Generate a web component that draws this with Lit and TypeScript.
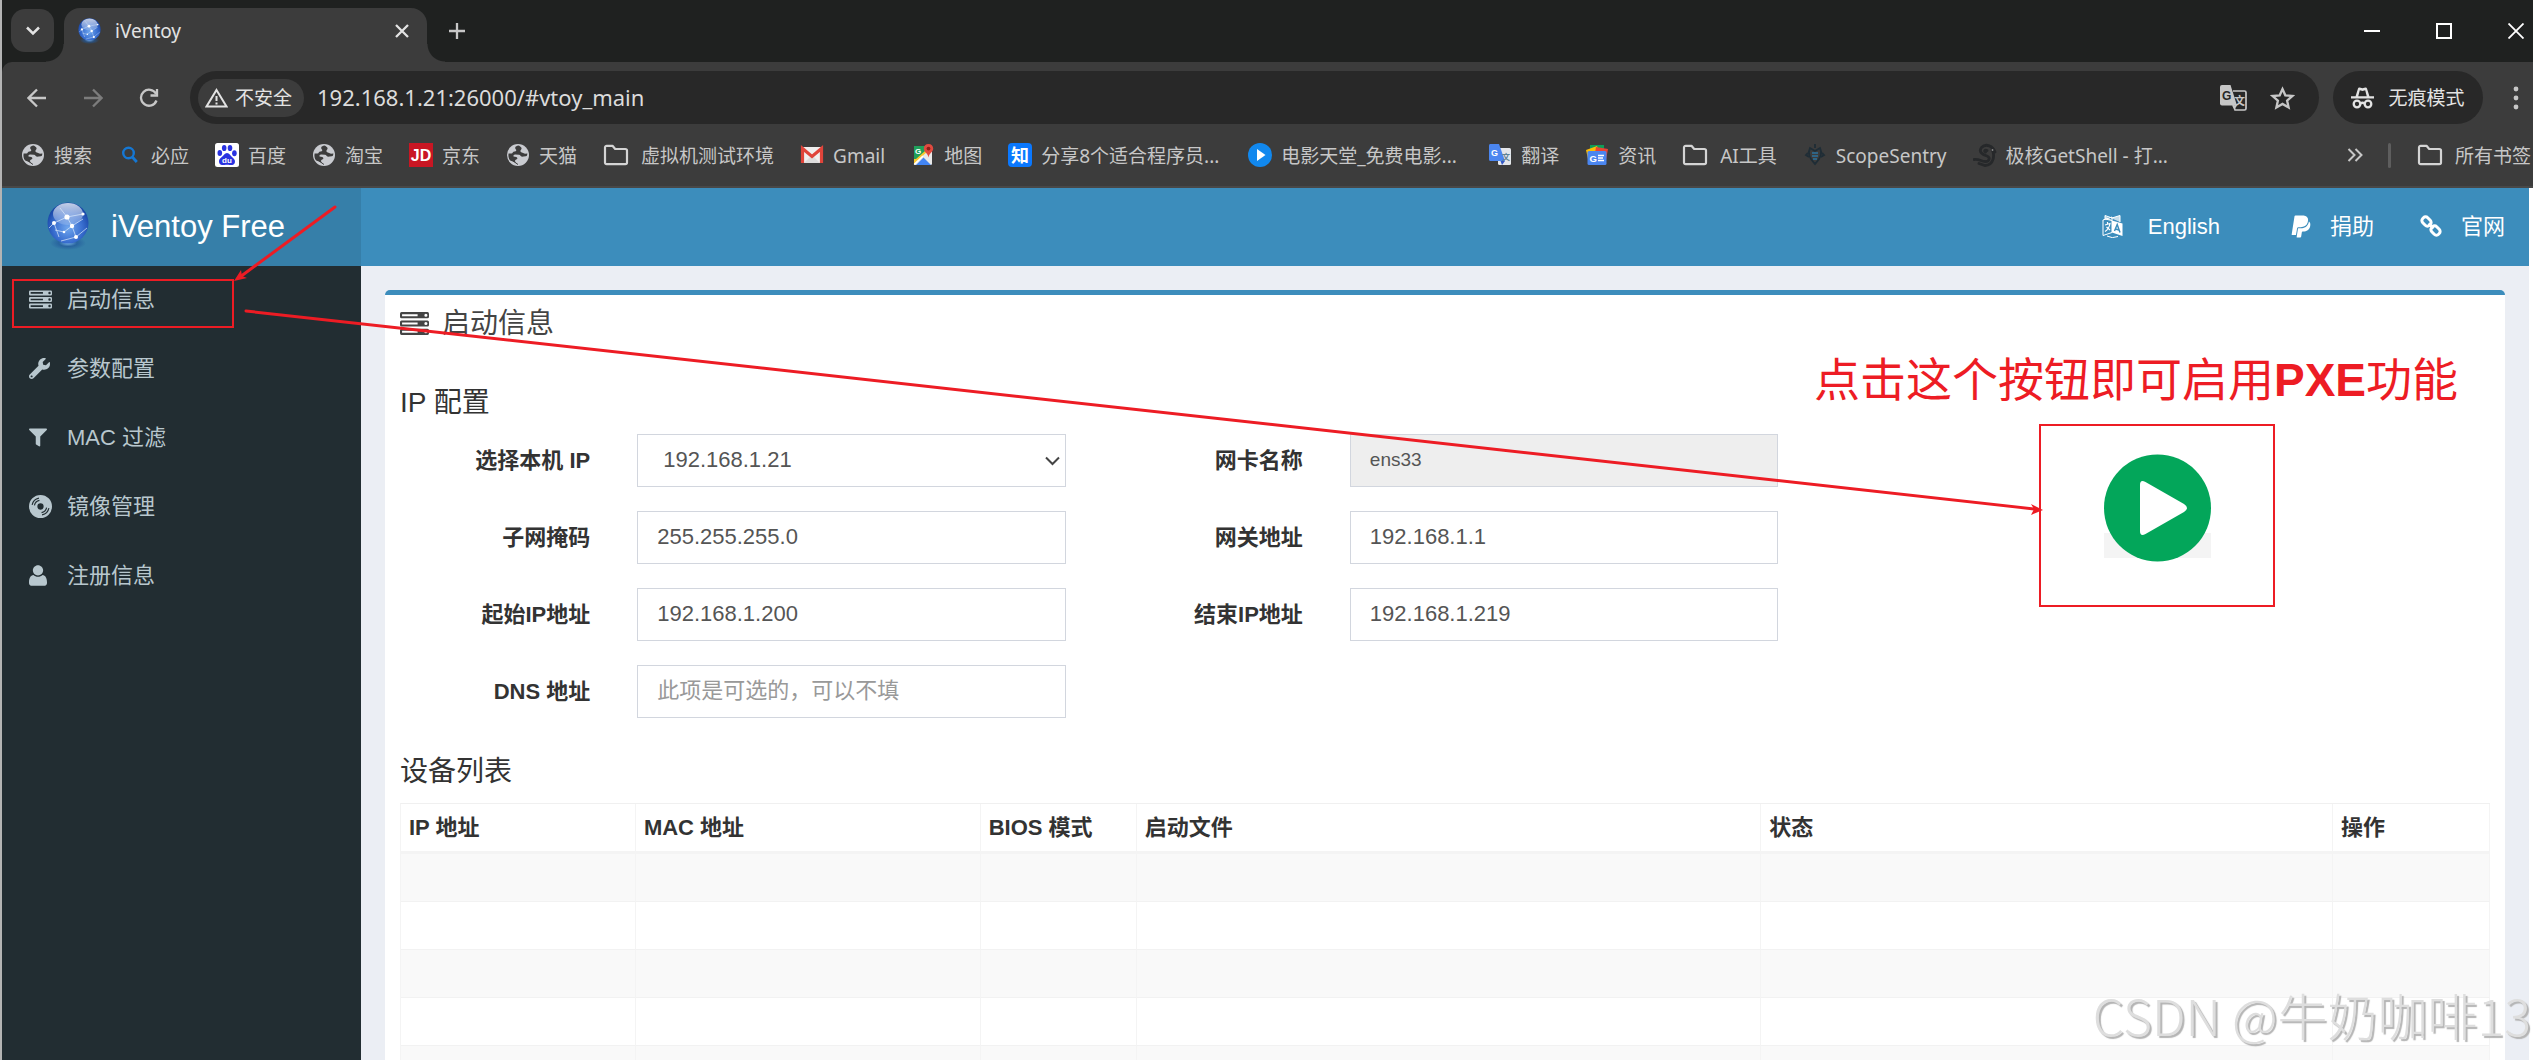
import { LitElement, html, css, svg, nothing } from "lit";
import { customElement } from "lit/decorators.js";

const orb = (id: string, cls: string) => html`
  <svg class=${cls} viewBox="0 0 42 48" aria-hidden="true">
    <defs>
      <radialGradient id=${id} cx="50%" cy="62%" r="58%">
        <stop offset="0" stop-color="#6fa6ee" />
        <stop offset="0.6" stop-color="#3a6fd0" />
        <stop offset="1" stop-color="#1745a6" />
      </radialGradient>
      <linearGradient id=${id + "-shine"} x1="0" y1="0" x2="0" y2="1">
        <stop offset="0" stop-color="#ffffff" stop-opacity="0.75" />
        <stop offset="1" stop-color="#ffffff" stop-opacity="0.15" />
      </linearGradient>
      <radialGradient id=${id + "-shade"} cx="50%" cy="50%" r="50%">
        <stop offset="0" stop-color="#8cc4f2" stop-opacity="0.9" />
        <stop offset="0.5" stop-color="#22589a" stop-opacity="0.7" />
        <stop offset="1" stop-color="#22589a" stop-opacity="0" />
      </radialGradient>
    </defs>
    <ellipse cx="21" cy="41" rx="18" ry="7" fill="url(#${id}-shade)" />
    <circle cx="21" cy="21" r="20.5" fill="url(#${id})" />
    <ellipse cx="21" cy="12" rx="15" ry="11" fill="url(#${id}-shine)" />
    <path d="M13 6L20 15L36 12M20 15L7 21L2 26M20 15L25 24L36 17M25 24L17 30L8 28M25 24L29 35L14 39M29 35L40 26M7 21L12 35" fill="none" stroke="#dbe9fb" stroke-width="1" stroke-opacity="0.7" />
    <circle cx="20" cy="15" r="2.6" fill="#fff" /><circle cx="36" cy="12" r="1.6" fill="#fff" />
    <circle cx="7" cy="21" r="2" fill="#fff" /><circle cx="25" cy="24" r="2.2" fill="#fff" />
    <circle cx="17" cy="30" r="1.3" fill="#fff" /><circle cx="29" cy="35" r="2" fill="#fff" />
  </svg>`;

const globe = svg`
  <circle cx="12" cy="12" r="11" fill="#c9cbd0"/>
  <path d="M12.500 2.500C9 3 8.500 5 10 6.500C11 7.600 9.500 8.500 8 8.600C6.500 9 7 10.500 5.500 10.600L2.600 10.400C2 13 2.800 15.800 4.200 17.500L10 19.800C8.600 18.600 8.800 17 10.200 16.600C12 16.200 11.600 14.600 10.200 14L7.500 13.500C7.200 12.200 8 11.400 9.500 11.600L13 11.800C14.500 12 14.500 13.600 16 13.700L19.500 13.200C21 13.500 21.200 12 21.400 10.500L19 10.800L16.500 9.800C14.500 9.500 13.600 8 15 6.800C16.200 5.600 15.800 4 12.500 2.500Z" fill="#3c3c3c"/>
  <path d="M3 15L12 21.500" stroke="#3c3c3c" stroke-width="1" fill="none"/>`;
const folder = svg`<path d="M2 4.500C2 3.400 2.800 2.800 3.700 2.800H9.500L12.200 6H22.300C23.400 6 24 6.700 24 7.600V19.500C24 20.500 23.300 21.200 22.300 21.200H3.700C2.700 21.200 2 20.500 2 19.500Z" fill="none" stroke="#d4d4d4" stroke-width="2.200" stroke-linejoin="round"/>`;

const glyphs: Record<string, unknown> = {
  globe,
  bing: svg`<circle cx="10.500" cy="10" r="5.300" fill="none" stroke="#1577d3" stroke-width="2.400"/><path d="M14.300 14L18.800 19" stroke="#1577d3" stroke-width="2.800"/>`,
  baidu: svg`<rect width="24" height="24" rx="2.500" fill="#fff"/><g fill="#2932e1"><ellipse cx="4.800" cy="10" rx="2.300" ry="3"/><ellipse cx="9.200" cy="5" rx="2.300" ry="3.100"/><ellipse cx="15" cy="5" rx="2.300" ry="3.100"/><ellipse cx="19.400" cy="10.200" rx="2.300" ry="3"/><path d="M12 10C9.500 10 8.800 12.400 6.800 14C4.600 15.700 3.400 17.200 4.200 19.700C5 22.200 7.500 22.200 9.500 21.900C11.300 21.600 12.900 21.600 14.600 21.900C16.800 22.300 19.300 22.100 19.900 19.500C20.500 17 18.900 15.600 17 14C15.200 12.400 14.500 10 12 10Z"/></g><text x="12" y="20" class="g" font-size="8" fill="#fff" text-anchor="middle">du</text>`,
  jd: svg`<rect width="24" height="24" fill="#c91623"/><text x="12" y="18" class="g" font-size="16" fill="#fff" text-anchor="middle">JD</text>`,
  gmail: svg`<rect x="1" y="4" width="22" height="16" rx="1.500" fill="#f0efef"/><path d="M4 20L12 12L20 20Z" fill="#dddcdc"/><path d="M2.500 20V5.500L12 13.500L21.500 5.500V20" fill="none" stroke="#e0443a" stroke-width="3.200"/>`,
  maps: svg`<rect x="3" y="3" width="18" height="19" rx="1.500" fill="#e9e9e9"/><path d="M4.500 3H15L3 16V4.500C3 3.600 3.600 3 4.500 3Z" fill="#20a05a"/><path d="M3 16L15 4L18 7L3 21Z" fill="#fbc92f"/><path d="M3 3H14V8L5 16H3Z" fill="#20a05a"/><path d="M5 22L12.500 14.500L20 22Z" fill="#4285f4"/><path d="M3.200 21.500L12 13" stroke="#fff" stroke-width="1.500"/><text x="4" y="11" class="g" font-size="8" fill="#fff">G</text><path d="M17.500 1C14.700 1 12.800 3 12.800 5.600C12.800 9 16.600 10 17.500 14.500C18.400 10 22.200 9 22.200 5.600C22.200 3 20.300 1 17.500 1Z" fill="#e04a3f"/><circle cx="17.500" cy="5.600" r="1.900" fill="#8c1f18"/>`,
  zhihu: svg`<rect width="24" height="24" rx="4" fill="#0a78ff"/><text x="12" y="18.500" font-size="18" font-weight="700" fill="#fff" text-anchor="middle" class="c">知</text>`,
  play: svg`<circle cx="12" cy="12" r="12" fill="#1188ee"/><path d="M9 6V18L17.500 12Z" fill="#fff"/>`,
  translate: svg`<rect x="10" y="5" width="13" height="17" rx="1.500" fill="#e4e6ea"/><path d="M2.500 1H11L17 18H2.500C1.500 18 1 17.400 1 16.500V2.500C1 1.600 1.600 1 2.500 1Z" fill="#4b86f0"/><path d="M12.500 18H17L14 22Z" fill="#3458c5"/><text x="3" y="13" class="g" font-size="9" fill="#fff">G</text><text x="14" y="17" class="c" font-size="8" font-weight="700" fill="#5f8194">文</text>`,
  news: svg`<rect x="5" y="2" width="14" height="8" fill="#0f9d58"/><path d="M1 7L12 3L15 10L3 16Z" fill="#fbbc05"/><path d="M23 6L11 4L10 10L21 17Z" fill="#ea4335"/><rect x="2.500" y="8" width="19" height="14" rx="1.500" fill="#4b86f0"/><text x="4.500" y="18.500" class="g" font-size="9.500" fill="#fff">G</text><path d="M13 12.500H19M13 15H18M13 17.500H19" stroke="#fff" stroke-width="1.300"/>`,
  scope: svg`<g fill="none" stroke="#1f2d36" stroke-width="1.800"><path d="M12 1V5M7 5C5 9 5 14 12 21C19 14 19 9 17 5L12 8Z"/><path d="M9 10H15M9 13H15M10 16H14" stroke="#2f6485"/><path d="M5 10L3 12L6 14M19 10L21 12L18 14"/></g>`,
  shell: svg`<path d="M22 9C20 3 13 0 8.500 4.500C5 9 10 12 14 13C18 14.500 16 19 12 18.500C8 18.500 7 16 1 16.500M19 6C22 12 21 22 12 22.500L6 20.500M14 7.500C12 6.500 10.800 8 12.500 9" fill="none" stroke="#26282a" stroke-width="2.800" stroke-linecap="round"/><circle cx="19.500" cy="7" r="0.900" fill="#888"/>`,
};

const bookmarks: [string, string][] = [
  ["globe", "搜索"], ["bing", "必应"], ["baidu", "百度"], ["globe", "淘宝"], ["jd", "京东"], ["globe", "天猫"],
  ["folder", "虚拟机测试环境"], ["gmail", "Gmail"], ["maps", "地图"], ["zhihu", "分享8个适合程序员..."],
  ["play", "电影天堂_免费电影..."], ["translate", "翻译"], ["news", "资讯"], ["folder", "AI工具"],
  ["scope", "ScopeSentry"], ["shell", "极核GetShell - 打..."],
];

const serverBars = svg`
  <g fill="currentColor">
    ${[0, 8, 16].map((y) => svg`<path fill-rule="evenodd" d="M1.500 ${y}H26.500Q28 ${y} 28 ${y + 1.5}V${y + 4.5}Q28 ${y + 6} 26.500 ${y + 6}H1.500Q0 ${y + 6} 0 ${y + 4.5}V${y + 1.5}Q0 ${y} 1.500 ${y}ZM2 ${y + 2}V${y + 4}H17V${y + 2}ZM23.500 ${y + 3}a1.500 1.500 0 1 0 3 0a1.500 1.500 0 1 0 -3 0Z"/>`)}
  </g>`;

const menu = [
  { text: "启动信息", box: "0 0 28 22", w: 23, icon: serverBars },
  { text: "参数配置", box: "0 0 512 512", w: 21, icon: svg`<path fill="currentColor" d="M507.73 109.1c-2.24-9.03-13.54-12.09-20.12-5.51l-74.36 74.36-67.88-11.31-11.31-67.88 74.36-74.36c6.62-6.62 3.43-17.9-5.66-20.16-47.38-11.74-99.55.91-136.58 37.93-39.64 39.64-50.55 97.1-34.05 147.2L18.74 402.76c-24.99 24.99-24.99 65.51 0 90.5 24.99 24.99 65.51 24.99 90.5 0l213.21-213.21c50.12 16.71 107.47 5.68 147.37-34.22 37.07-37.07 49.7-89.32 37.91-136.73zM64 472c-13.25 0-24-10.75-24-24 0-13.26 10.75-24 24-24s24 10.74 24 24c0 13.25-10.75 24-24 24z"/>` },
  { text: "MAC 过滤", box: "0 0 512 512", w: 18, icon: svg`<path fill="currentColor" d="M487.976 0H24.028C2.71 0-8.047 25.866 7.058 40.971L192 225.941V432c0 7.831 3.821 15.17 10.237 19.662l80 55.98C298.02 518.69 320 507.493 320 487.98V225.941l184.947-184.97C520.021 25.896 509.338 0 487.976 0z"/>` },
  { text: "镜像管理", box: "0 0 22 22", w: 23, icon: svg`<path fill="currentColor" fill-rule="evenodd" d="M11 0a11 11 0 1 1 0 22a11 11 0 1 1 0-22ZM11 8a3 3 0 1 0 0 6a3 3 0 1 0 0-6Z"/><path d="M3 9.500A8.300 8.300 0 0 1 9.500 3M5.200 10A6 6 0 0 1 10 5.200M19 12.500A8.300 8.300 0 0 1 12.500 19M16.800 12A6 6 0 0 1 12 16.800" fill="none" stroke="#222d32" stroke-width="1.100"/>` },
  { text: "注册信息", box: "0 0 448 512", w: 18, icon: svg`<path fill="currentColor" d="M224 256c70.7 0 128-57.3 128-128S294.7 0 224 0 96 57.3 96 128s57.3 128 128 128zm113.600-14c-30 28-70 44-113.600 44s-83.600-16-113.600-44C40 250 0 318 0 422.400V440c0 44 30 72 76 72h296c46 0 76-28 76-72v-17.600C448 318 408 250 337.600 242z"/>` },
];

const columns = [["IP 地址", 235], ["MAC 地址", 345], ["BIOS 模式", 156], ["启动文件", 625], ["状态", 572], ["操作", 157]] as [string, number][];

@customElement("browser-chrome")
class BrowserChrome extends LitElement {
  static styles = css`
    :host { display: block; color: #c7c7c7; background: #1f2120; font: 19px/26px "Noto Sans", "Noto Sans CJK SC", sans-serif; }
    button { padding: 0; border: 0; background: none; color: inherit; font: inherit; display: flex; align-items: center; justify-content: center; }
    svg { display: block; flex: none; }
    .g { font-family: "Liberation Sans", sans-serif; font-weight: 700; }
    .c { font-family: "Noto Sans CJK SC", sans-serif; }
    .tabs { display: flex; height: 62px; }
    .search { margin: 9px 10px 0 9px; width: 43px; height: 43px; border-radius: 14px; background: #3c3c3c; color: #e3e3e3; }
    .tab { position: relative; display: flex; align-items: center; gap: 14px; margin-top: 8px; width: 363px; box-sizing: border-box; padding: 0 17px 8px 14px; background: #3c3c3c; border-radius: 16px 16px 0 0; color: #e3e3e3; }
    .tab::before, .tab::after { content: ""; position: absolute; bottom: 0; width: 18px; height: 18px; }
    .tab::before { right: 100%; background: radial-gradient(circle at 0 0, transparent 17px, #3c3c3c 18px); }
    .tab::after { left: 100%; background: radial-gradient(circle at 100% 0, transparent 17px, #3c3c3c 18px); }
    .fav { width: 23px; height: 26px; }
    .title { flex: 1; }
    .new { margin: 9px 0 0 10px; width: 40px; height: 43px; }
    .win { display: flex; gap: 38px; margin-left: auto; color: #fff; }
    .win button { width: 34px; }
    .bar { display: flex; align-items: center; height: 62px; box-sizing: border-box; padding: 9px 0 0 15px; background: #3c3c3c; border-radius: 10px 0 0 0; }
    .nav { display: flex; gap: 16px; margin-right: 21px; }
    .nav button { width: 40px; height: 40px; }
    .dim { color: #7c7c7c; }
    .omni { flex: 1; display: flex; align-items: center; height: 53px; box-sizing: border-box; padding: 0 24px 0 8px; border-radius: 27px; background: #282828; }
    .chip { gap: 7px; height: 38px; padding: 0 12px 0 7px; border-radius: 19px; background: #3c3c3c; color: #e3e3e3; }
    .url { flex: 1; min-width: 0; height: 40px; box-sizing: border-box; margin-left: 13px; padding: 0 0 2px; border: 0; outline: 0; background: none; color: #dcdcdc; font: 22px/38px "Noto Sans", sans-serif; }
    .acts { display: flex; gap: 23px; }
    .incog { gap: 14px; margin: 0 16px 0 14px; height: 53px; width: 150px; border-radius: 27px; background: #282828; color: #e3e3e3; }
    .dots { width: 34px; height: 40px; }
    .marks { display: flex; align-items: center; height: 62px; box-sizing: content-box; padding: 0 2px 0 19px; background: #3c3c3c; border-bottom: 2px solid #484848; white-space: nowrap; overflow: hidden; }
    .mark { display: flex; align-items: center; gap: 9px; margin-right: 26px; color: inherit; text-decoration: none; }
    .mark span { padding-top: 1px; }
    .mark.folder { gap: 12px; }
    .mark.long span { min-width: 181px; }
    .tail { display: flex; align-items: center; margin-left: auto; }
    .tail .mark { margin: 0; }
    .sep { width: 3px; height: 25px; margin: 0 26px 0 25px; border-radius: 2px; background: #5e5e5e; }
  `;

  mark(icon: string, text: string) {
    const f = icon === "folder";
    const kind = f ? "folder" : text.endsWith("...") ? "long" : "";
    return html`<a class="mark ${kind}" href="#">
      <svg width=${f ? 26 : 24} height="24" viewBox="0 0 ${f ? 26 : 24} 24" aria-hidden="true">${f ? folder : glyphs[icon]}</svg><span>${text}</span></a>`;
  }

  render() {
    return html`
      <div class="tabs">
        <button class="search" aria-label="Search tabs"><svg width="16" height="12" viewBox="0 0 16 12" fill="none" stroke="currentColor" stroke-width="2.500"><path d="M2 2.500L8 8.500L14 2.500" /></svg></button>
        <div class="tab">
          ${orb("fav", "fav")}<span class="title">iVentoy</span>
          <button aria-label="Close tab"><svg width="16" height="16" viewBox="0 0 16 16" stroke="currentColor" stroke-width="2.300"><path d="M2 2L14 14M14 2L2 14" /></svg></button>
        </div>
        <button class="new" aria-label="New tab"><svg width="18" height="18" viewBox="0 0 18 18" stroke="currentColor" stroke-width="2.300"><path d="M9 1V17M1 9H17" /></svg></button>
        <div class="win">
          <button aria-label="Minimize"><svg width="16" height="16" viewBox="0 0 16 16" stroke="currentColor" stroke-width="2"><path d="M0 8H16" /></svg></button>
          <button aria-label="Maximize"><svg width="16" height="16" viewBox="0 0 16 16" fill="none" stroke="currentColor" stroke-width="2"><rect x="1" y="1" width="14" height="14" /></svg></button>
          <button aria-label="Close"><svg width="16" height="16" viewBox="0 0 16 16" stroke="currentColor" stroke-width="1.800"><path d="M0.500 0.500L15.500 15.500M15.500 0.500L0.500 15.500" /></svg></button>
        </div>
      </div>
      <div class="bar">
        <div class="nav">
          <button aria-label="Back"><svg width="20" height="20" viewBox="0 0 20 20" fill="none" stroke="currentColor" stroke-width="2.300"><path d="M19 10H2M10 1.500L1.500 10L10 18.500" /></svg></button>
          <button class="dim" aria-label="Forward"><svg width="20" height="20" viewBox="0 0 20 20" fill="none" stroke="currentColor" stroke-width="2.300"><path d="M1 10H18M10 1.500L18.500 10L10 18.500" /></svg></button>
          <button aria-label="Reload"><svg width="20" height="20" viewBox="0 0 20 20" fill="none" stroke="currentColor" stroke-width="2.300"><path d="M17.500 12.500A8 8 0 1 1 17 5.800M18 1V7.500H11.500" /></svg></button>
        </div>
        <div class="omni">
          <button class="chip"><svg width="23" height="20" viewBox="0 0 23 20" fill="none" stroke="currentColor" stroke-width="2"><path d="M11.500 2L21.500 18.500H1.500ZM11.500 8V13M11.500 14.500V16.500" /></svg>不安全</button>
          <input class="url" aria-label="Address" value="192.168.1.21:26000/#vtoy_main" />
          <div class="acts">
            <button aria-label="Translate this page"><svg width="27" height="26" viewBox="0 0 27 26"><path d="M13 6H24.500Q26 6 26 7.500V23.500Q26 25 24.500 25H15L13 19" fill="none" stroke="#c7c7c7" stroke-width="1.700" /><path d="M2 0H10.500L17 20.500H2Q0 20.500 0 18.500V2Q0 0 2 0Z" fill="#c7c7c7" /><path d="M12 20.500H17L14.500 24.500Z" fill="#c7c7c7" /><text x="2" y="14.500" class="g" font-size="12" fill="#282828">G</text><text x="14" y="19.500" class="c" font-size="11" font-weight="700" fill="#c7c7c7">文</text></svg></button>
            <button aria-label="Bookmark this tab"><svg width="25" height="24" viewBox="0 0 25 24" fill="none" stroke="currentColor" stroke-width="2.300"><path d="M12.500 3L15.300 9.300L22.300 10L17.100 14.600L18.600 21.500L12.500 17.900L6.400 21.500L7.900 14.600L2.700 10L9.700 9.300Z" /></svg></button>
          </div>
        </div>
        <button class="incog"><svg width="23" height="22" viewBox="0 0 23 22"><path d="M0 9.300H23V11.600H0ZM4.500 9.500L7 1.500Q7.300 0.300 8.700 0.500L11.500 1.300L14.300 0.500Q15.700 0.300 16 1.500L18.500 9.500H15.800L14.200 3.300L11.500 4L8.800 3.300L7.200 9.500Z" fill="currentColor" /><g fill="none" stroke="currentColor" stroke-width="2.300"><circle cx="6" cy="17" r="3.300" /><circle cx="17" cy="17" r="3.300" /><path d="M9.300 16.500Q11.500 15 13.700 16.500" /></g></svg>无痕模式</button>
        <button class="dots" aria-label="Menu"><svg width="6" height="24" viewBox="0 0 6 24" fill="currentColor"><circle cx="3" cy="3" r="2.400" /><circle cx="3" cy="12" r="2.400" /><circle cx="3" cy="21" r="2.400" /></svg></button>
      </div>
      <nav class="marks">
        ${bookmarks.map(([i, t]) => this.mark(i, t))}
        <div class="tail">
          <button aria-label="More bookmarks"><svg width="16" height="14" viewBox="0 0 16 14" fill="none" stroke="currentColor" stroke-width="2"><path d="M1.500 1L7.500 7L1.500 13M8.500 1L14.500 7L8.500 13" /></svg></button>
          <span class="sep"></span>
          ${this.mark("folder", "所有书签")}
        </div>
      </nav>`;
  }
}

@customElement("boot-panel")
class BootPanel extends LitElement {
  static styles = css`
    :host { display: block; box-sizing: border-box; border-top: 5px solid #3c8dbc; border-radius: 5px 5px 0 0; padding: 0 15px; background: #fff; color: #333; }
    .head { display: flex; align-items: center; gap: 13px; height: 56px; margin: 0; font-size: 28px; font-weight: 400; color: #444; }
    .head svg { width: 29px; height: 23px; }
    h3 { margin: 36px 0 15px; font-size: 28px; line-height: 32px; font-weight: 400; }
    form { display: grid; grid-template-columns: 190fr 428fr 190fr 428fr 664fr; gap: 24px 47px; align-items: center; padding-bottom: 2px; }
    label { padding-bottom: 1px; text-align: right; font-weight: 700; font-size: 22px; line-height: 31px; }
    input, select { width: 100%; height: 53px; box-sizing: border-box; margin: 0; padding: 0 19px 2px; border: 1px solid #d2d6de; border-radius: 0; background: #fff; color: #555; font: inherit; outline: 0; }
    input::placeholder { color: #999; opacity: 1; }
    input:disabled { background: #eee; font-size: 19px; }
    .pick { display: grid; align-items: center; }
    .pick > * { grid-area: 1 / 1; }
    select { appearance: none; padding: 0 25px 2px; }
    .pick svg { justify-self: end; margin-right: 6px; pointer-events: none; }
    .c1 { grid-column: 1; } .c2 { grid-column: 2; } .c3 { grid-column: 3; } .c4 { grid-column: 4; }
    .go { grid-column: 5; grid-row: 1 / 5; align-self: start; justify-self: center; margin-top: 20px; padding: 0; border: 0; background: none; }
    .go svg { display: block; }
    table { width: 100%; table-layout: fixed; border-collapse: separate; border-spacing: 0; border-top: 1px solid #f0f0f0; border-left: 1px solid #f4f4f4; }
    th, td { box-sizing: border-box; height: 48px; padding: 0 8px; border-right: 1px solid #f4f4f4; border-bottom: 1px solid #f2f2f2; text-align: left; }
    th { height: 50px; padding-bottom: 1px; border-bottom: 3px solid #f4f4f4; font-weight: 700; }
    tbody tr:nth-child(odd) td { background: #f9f9f9; }
  `;

  field(id: string, text: string, value: string, col: number, off = false, hint = "") {
    return html`<label class="c${col}" for=${id}>${text}</label>
      <input class="c${col + 1}" id=${id} type="text" value=${value} placeholder=${hint || nothing} ?disabled=${off} />`;
  }

  render() {
    const total = columns.reduce((s, c) => s + c[1], 0);
    return html`
      <h2 class="head"><svg viewBox="0 0 28 22" aria-hidden="true">${serverBars}</svg>启动信息</h2>
      <h3>IP 配置</h3>
      <form>
        <label class="c1" for="ip">选择本机 IP</label>
        <div class="pick c2">
          <select id="ip"><option>192.168.1.21</option></select>
          <svg width="15" height="10" viewBox="0 0 15 10" fill="none" stroke="#444" stroke-width="2"><path d="M1 1.500L7.500 8L14 1.500" /></svg>
        </div>
        ${this.field("nic", "网卡名称", "ens33", 3, true)}
        ${this.field("mask", "子网掩码", "255.255.255.0", 1)}
        ${this.field("gw", "网关地址", "192.168.1.1", 3)}
        ${this.field("start", "起始IP地址", "192.168.1.200", 1)}
        ${this.field("end", "结束IP地址", "192.168.1.219", 3)}
        ${this.field("dns", "DNS 地址", "", 1, false, "此项是可选的，可以不填")}
        <button class="go" type="button" aria-label="启动">
          <svg width="107" height="108" viewBox="0 0 107 108">
            <rect y="79" width="107" height="25" fill="#f4f4f4" />
            <circle cx="53.500" cy="54" r="53.500" fill="#03a65a" />
            <path d="M36 31Q36 25 41.500 28L80 50Q86 54 80 58L41.500 80Q36 83 36 77Z" fill="#fff" />
          </svg>
        </button>
      </form>
      <h3>设备列表</h3>
      <table>
        <colgroup>${columns.map((c) => html`<col style="width:${(c[1] / total) * 100}%" />`)}</colgroup>
        <thead><tr>${columns.map((c) => html`<th scope="col">${c[0]}</th>`)}</tr></thead>
        <tbody>${[0, 1, 2, 3, 4, 5].map(() => html`<tr>${columns.map(() => html`<td></td>`)}</tr>`)}</tbody>
      </table>`;
  }
}

@customElement("app-root")
class AppRoot extends LitElement {
  static styles = css`
    :host { position: relative; display: flex; flex-direction: column; height: 100vh; box-sizing: border-box; overflow: hidden; border-left: 2px solid #b4b4b4; background: #fff; font: 22px/31px "Liberation Sans", "Noto Sans CJK SC", sans-serif; }
    browser-chrome { flex: none; }
    .page { flex: 1; min-height: 0; display: grid; grid-template: 78px 1fr / 359px 1fr; margin-right: 4px; background: #ebeef4; }
    .brand { display: flex; align-items: center; gap: 22px; padding: 0 0 2px 45px; background: #367fa9; color: #fff; font-size: 31px; text-decoration: none; }
    .logo { width: 42px; height: 48px; }
    .top { display: flex; align-items: center; justify-content: flex-end; padding-right: 1px; background: #3c8dbc; }
    .top a { display: flex; align-items: center; gap: 19px; padding: 0 23px 2px; color: #fff; text-decoration: none; }
    .top .lang { gap: 25px; padding-right: 48px; }
    .side { background: #222d32; }
    .side ul { margin: 0; padding: 0; list-style: none; }
    .side a { display: grid; grid-template-columns: 38px 1fr; align-items: center; height: 69px; box-sizing: border-box; padding: 0 0 2px 27px; color: #b8c7ce; text-decoration: none; }
    .side svg { display: block; }
    main { min-width: 0; overflow: hidden; padding: 24px 24px 0; }
    .notes { position: absolute; inset: 0 0 0 -2px; pointer-events: none; }
    .notes svg { position: absolute; inset: 0; width: 100%; height: 100%; }
    .say { position: absolute; right: 75px; top: 350px; margin: 0; color: #ed1c24; font-size: 46px; line-height: 60px; white-space: nowrap; }
    .say b { font-weight: 700; }
    .sign { position: absolute; right: 2px; top: 979px; margin: 0; color: #dedede; font: 300 50px/70px "Noto Sans CJK SC", sans-serif; white-space: nowrap; text-shadow: 2px 2px 1px #b4b4b4; }
  `;

  render() {
    return html`
      <browser-chrome></browser-chrome>
      <div class="page">
        <a class="brand" href="#">${orb("brand", "logo")}iVentoy Free</a>
        <nav class="top">
          <a class="lang" href="#"><svg width="21" height="23" viewBox="0 0 21 23" aria-hidden="true"><path d="M1 5L10 2V17.500L1 20.500Z" fill="none" stroke="#fff" stroke-width="1" /><path d="M10 5.500L20.500 8.500V21L10 17.500Z" fill="#fff" /><path d="M3 0.500L10 3L18 0.500V7M3 0.500V4L10 5.500" fill="#fff" fill-opacity="0.7" stroke="#fff" stroke-width="1" /><path d="M5.500 7V9M3 10L8 8.500Q7 14 3 16.500M4.500 12L8 15" fill="none" stroke="#fff" stroke-width="1.200" /><path d="M12.500 16L15.200 9.500L18 17.500M13.300 14L17 15" fill="none" stroke="#3c8dbc" stroke-width="1.500" /><path d="M5 21Q10 24 16 21.500" fill="none" stroke="#fff" stroke-width="1" /></svg>English</a>
          <a href="#"><svg width="20" height="23" viewBox="0 20 384 472" aria-hidden="true" fill="#fff"><path d="M111.4 295.9c-3.5 19.2-17.4 108.7-21.5 134-.3 1.8-1 2.5-3 2.5H12.3c-7.6 0-13.1-6.6-12.1-13.9L58.8 46.6c1.5-9.6 10.1-16.9 20-16.9 152.3 0 165.1-3.7 204 11.4 60.1 23.3 65.6 79.5 44 140.3-21.5 62.6-72.5 89.5-140.1 90.3-43.4.7-69.5-7-75.3 24.2zM357.1 152c-1.8-1.3-2.5-1.8-3 1.3-2 11.4-5.1 22.5-8.8 33.6-39.9 113.8-150.5 103.9-204.5 103.9-6.1 0-10.1 3.3-10.9 9.4-22.6 140.4-27.1 169.7-27.1 169.7-1 7.1 3.5 12.9 10.6 12.9h63.5c8.6 0 15.7-6.3 17.4-14.9.7-5.4-1.1 6.1 14.4-91.3 4.6-22 14.3-19.7 29.3-19.7 71 0 126.4-28.8 142.9-112.3 6.5-34.8 4.6-71.4-23.8-92.6z" /></svg>捐助</a>
          <a href="#"><svg width="22" height="22" viewBox="0 0 22 22" aria-hidden="true" fill="none" stroke="#fff" stroke-width="3"><rect x="-4.800" y="-3.500" width="9.600" height="7" rx="3" transform="translate(6.500 6.500) rotate(45)" /><rect x="-4.800" y="-3.500" width="9.600" height="7" rx="3" transform="translate(15.500 15.500) rotate(45)" /><path d="M8.500 8.500L13.500 13.500" stroke-width="2.500" /></svg>官网</a>
        </nav>
        <nav class="side"><ul>
          ${menu.map((m) => html`<li><a href="#"><svg viewBox=${m.box} width=${m.w} height="23" aria-hidden="true">${m.icon}</svg>${m.text}</a></li>`)}
        </ul></nav>
        <main><boot-panel></boot-panel></main>
      </div>
      <div class="notes">
        <svg aria-hidden="true" fill="none" stroke="#ed1c24" stroke-width="3">
          <rect x="13" y="280" width="220" height="47" stroke-width="2" />
          <rect x="2040" y="425" width="234" height="181" stroke-width="2" />
          <path d="M335 207L240 277M246 311L2035 509" stroke-linecap="round" />
          <path d="M234 281L241 270L242 276L247 278ZM2043 510L2031 504L2034 509L2031 515Z" fill="#ed1c24" stroke="none" />
        </svg>
        <p class="say">点击这个按钮即可启用<b>PXE</b>功能</p>
        <p class="sign">CSDN @牛奶咖啡13</p>
      </div>`;
  }
}
